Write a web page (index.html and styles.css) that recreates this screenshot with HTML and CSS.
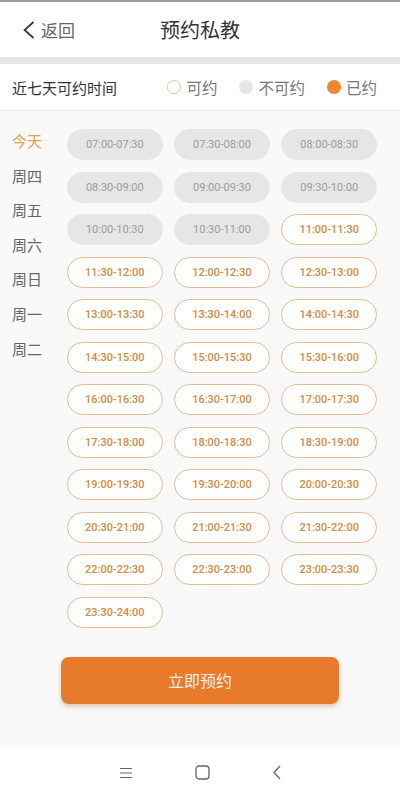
FILE: index.html
```html
<!DOCTYPE html>
<html lang="zh-CN">
<head>
    <meta charset="utf-8" />
    <meta name="viewport" content="width=device-width, initial-scale=1" />
    <title>预约私教</title>
    <link rel="stylesheet" href="styles.css">
</head>
<body>
    <div class="page">
        <div class="header">
            <div class="back">
                <svg class="back-icon" width="12" height="18" viewBox="0 0 12 18">
                    <path d="M10.5 1 L1.6 9 L10.5 17" fill="none" stroke="#333" stroke-width="1.7" />
                </svg>
                <span>返回</span>
            </div>
            <h1 class="title">预约私教</h1>
        </div>
        <div class="band"></div>

        <div class="legend">
            <span class="legend-title">近七天可约时间</span>
            <div class="legend-items">
                <span class="legend-item"><i class="dot dot-open"></i>可约</span>
                <span class="legend-item"><i class="dot dot-off"></i>不可约</span>
                <span class="legend-item"><i class="dot dot-booked"></i>已约</span>
            </div>
        </div>

        <div class="main">
            <div class="schedule">
                <ul class="days">
                    <li class="active">今天</li>
                    <li>周四</li>
                    <li>周五</li>
                    <li>周六</li>
                    <li>周日</li>
                    <li>周一</li>
                    <li>周二</li>
                </ul>
                <div class="slots">
                    <span class="slot off">07:00-07:30</span>
                    <span class="slot off">07:30-08:00</span>
                    <span class="slot off">08:00-08:30</span>
                    <span class="slot off">08:30-09:00</span>
                    <span class="slot off">09:00-09:30</span>
                    <span class="slot off">09:30-10:00</span>
                    <span class="slot off">10:00-10:30</span>
                    <span class="slot off">10:30-11:00</span>
                    <span class="slot">11:00-11:30</span>
                    <span class="slot">11:30-12:00</span>
                    <span class="slot">12:00-12:30</span>
                    <span class="slot">12:30-13:00</span>
                    <span class="slot">13:00-13:30</span>
                    <span class="slot">13:30-14:00</span>
                    <span class="slot">14:00-14:30</span>
                    <span class="slot">14:30-15:00</span>
                    <span class="slot">15:00-15:30</span>
                    <span class="slot">15:30-16:00</span>
                    <span class="slot">16:00-16:30</span>
                    <span class="slot">16:30-17:00</span>
                    <span class="slot">17:00-17:30</span>
                    <span class="slot">17:30-18:00</span>
                    <span class="slot">18:00-18:30</span>
                    <span class="slot">18:30-19:00</span>
                    <span class="slot">19:00-19:30</span>
                    <span class="slot">19:30-20:00</span>
                    <span class="slot">20:00-20:30</span>
                    <span class="slot">20:30-21:00</span>
                    <span class="slot">21:00-21:30</span>
                    <span class="slot">21:30-22:00</span>
                    <span class="slot">22:00-22:30</span>
                    <span class="slot">22:30-23:00</span>
                    <span class="slot">23:00-23:30</span>
                    <span class="slot">23:30-24:00</span>
                </div>
            </div>
            <button class="submit" type="button">立即预约</button>
        </div>

        <div class="navbar">
            <svg width="14" height="14" viewBox="0 0 14 14">
                <path d="M1 2.5 H13 M1 7 H13 M1 11.5 H13" stroke="#666" stroke-width="1.2" />
            </svg>
            <svg width="15" height="15" viewBox="0 0 15 15">
                <rect x="1" y="1" width="13" height="13" rx="3" fill="none" stroke="#666" stroke-width="1.3" />
            </svg>
            <svg width="10" height="15" viewBox="0 0 10 15">
                <path d="M8 1 L2 7.5 L8 14" fill="none" stroke="#666" stroke-width="1.3" />
            </svg>
        </div>
    </div>
</body>
</html>
```

FILE: styles.css
```css
* {
    box-sizing: border-box;
}
body {
    margin: 0;
    font-family: "Noto Sans CJK SC", "Noto Sans", sans-serif;
    color: #333;
    background: #fff;
}
.page {
    width: 400px;
    height: 800px;
    display: flex;
    flex-direction: column;
    border-top: 2px solid #9a9a9a;
}
.header {
    height: 55px;
    display: flex;
    align-items: center;
    justify-content: center;
    position: relative;
    background: #fff;
}
.back {
    position: absolute;
    left: 23px;
    top: 0;
    bottom: 0;
    display: flex;
    align-items: center;
    gap: 6px;
    font-size: 17px;
    color: #666;
}
.back-icon {
    display: block;
}
.title {
    margin: 0;
    font-size: 20px;
    font-weight: 400;
    color: #333;
}
.band {
    height: 7px;
    background: #e6e6e6;
}
.legend {
    height: 47px;
    display: flex;
    align-items: center;
    justify-content: space-between;
    padding: 0 23px 0 12px;
    border-bottom: 1px solid #e8e8e8;
    background: #fff;
}
.legend-title {
    font-size: 15px;
    color: #333;
}
.legend-items {
    display: flex;
    gap: 22px;
}
.legend-item {
    display: flex;
    align-items: center;
    gap: 5px;
    font-size: 15.5px;
    color: #777;
}
.dot {
    width: 14px;
    height: 14px;
    border-radius: 50%;
}
.dot-open {
    border: 1px solid #e6c39c;
    background: #fff;
}
.dot-off {
    background: #e6e6e6;
}
.dot-booked {
    background: #f0862e;
}
.main {
    flex: 1;
    background: #f9f9f9;
    display: flex;
    flex-direction: column;
}
.schedule {
    display: flex;
    padding-right: 23px;
}
.days {
    list-style: none;
    margin: 0;
    padding: 13px 0 0 12px;
    width: 67px;
}
.days li {
    line-height: 34.6px;
    font-size: 15px;
    color: #666;
}
.days li.active {
    color: #e6a04c;
}
.slots {
    flex: 1;
    margin-top: 18px;
    display: grid;
    grid-template-columns: repeat(3, 1fr);
    column-gap: 11.5px;
    row-gap: 11.5px;
}
.slot {
    height: 31px;
    border-radius: 16px;
    border: 1px solid #e3bc93;
    background: #fff;
    display: flex;
    align-items: center;
    justify-content: center;
    font-family: Roboto, "Noto Sans", sans-serif;
    font-size: 11px;
    font-weight: 500;
    color: #d9893a;
}
.slot.off {
    border-color: #e6e6e6;
    background: #e6e6e6;
    color: #9b9b9b;
    font-weight: 400;
}
.submit {
    margin: 29px 61px 0;
    height: 47px;
    border: 0;
    border-radius: 8px;
    background: #e87a2c;
    color: #fdf1e6;
    font-family: "Noto Sans CJK SC", sans-serif;
    font-size: 16px;
    box-shadow: 0 3px 5px rgba(190, 110, 50, 0.35);
}
.navbar {
    height: 55px;
    background: #fff;
    display: flex;
    align-items: center;
    justify-content: center;
    gap: 62px;
}
.navbar svg {
    display: block;
}
```
